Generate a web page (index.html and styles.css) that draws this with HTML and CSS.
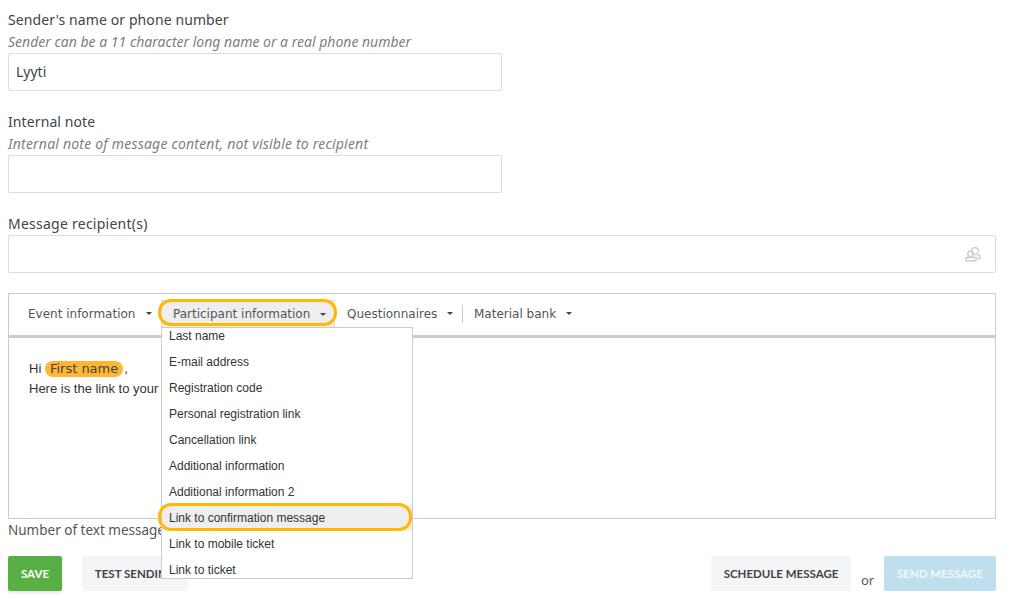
FILE: index.html
```html
<!DOCTYPE html>
<html lang="en">
<head>
<meta charset="utf-8">
<title>Text message</title>
<link rel="stylesheet" href="styles.css">
</head>
<body>
<main class="page">
  <section class="field">
    <div class="label">Sender's name or phone number</div>
    <div class="hint">Sender can be a 11 character long name or a real phone number</div>
    <div class="input half">Lyyti</div>
  </section>
  <section class="field">
    <div class="label">Internal note</div>
    <div class="hint hint-wide">Internal note of message content, not visible to recipient</div>
    <div class="input half"></div>
  </section>
  <section class="field recipients">
    <div class="label label-wide">Message recipient(s)</div>
    <div class="input full">
      <svg class="people" width="16" height="16" viewBox="0 0 16 16" fill="none" stroke="#cfcfcf" stroke-width="1.5">
        <circle cx="10" cy="5" r="3.4"/>
        <circle cx="5.6" cy="7.8" r="2.8"/>
        <path d="M1.2 14.8v-3.2h9.8v3.2z"/>
        <path d="M12.4 9.2h2.4v3.4h-2.6"/>
      </svg>
    </div>
  </section>
  <section class="editor">
    <div class="toolbar">
      <div class="tool first">Event information<span class="caret wide"></span></div>
      <div class="tool active">Participant information<span class="caret"></span></div>
      <div class="tool third">Questionnaires<span class="caret"></span></div>
      <div class="sep"></div>
      <div class="tool fourth">Material bank<span class="caret"></span></div>
    </div>
    <div class="content">
      <div>Hi <span class="tag">First name</span><span class="comma">,</span></div>
      <div>Here is the link to your</div>
    </div>
    <div class="ring ring-tool"></div>
    <div class="menu">
      <div class="menu-inner">
        <div class="item">Last name</div>
        <div class="item">E-mail address</div>
        <div class="item">Registration code</div>
        <div class="item">Personal registration link</div>
        <div class="item">Cancellation link</div>
        <div class="item">Additional information</div>
        <div class="item">Additional information 2</div>
        <div class="item selected">Link to confirmation message</div>
        <div class="item">Link to mobile ticket</div>
        <div class="item">Link to ticket</div>
      </div>
    </div>
    <div class="ring ring-item"></div>
  </section>
  <div class="count">Number of text messages</div>
  <div class="actions">
    <div class="btn save">SAVE</div>
    <div class="btn test">TEST SENDING</div>
    <div class="spacer"></div>
    <div class="btn schedule">SCHEDULE MESSAGE</div>
    <div class="or">or</div>
    <div class="btn send">SEND MESSAGE</div>
  </div>
</main>
</body>
</html>
```
FILE: styles.css
```css
html, body {
  margin: 0;
  padding: 0;
  background: #fff;
}
body {
  width: 1028px;
  height: 615px;
  overflow: hidden;
  font-family: "Noto Sans", "Open Sans", sans-serif;
  color: #444;
}
.page {
  width: 988px;
  padding: 9px 0 0 8px;
}
.field {
  margin-bottom: 20px;
}
.label {
  font-size: 14px;
  line-height: 22px;
  letter-spacing: .1px;
  color: #444;
}
.label-wide {
  letter-spacing: .25px;
}
.hint {
  font-size: 14px;
  line-height: 22px;
  font-style: italic;
  color: #808080;
}
.hint-wide {
  letter-spacing: .2px;
}
.input {
  box-sizing: border-box;
  height: 38px;
  border: 1px solid #ddd;
  border-radius: 2px;
  padding: 0 7px;
  font-size: 14px;
  line-height: 36px;
  color: #444;
}
.half {
  width: 494px;
}
.full {
  width: 988px;
  display: flex;
  justify-content: flex-end;
  align-items: center;
  padding-right: 14px;
}
.recipients {
  margin-top: 20px;
}
.editor {
  position: relative;
  box-sizing: border-box;
  width: 988px;
  height: 226px;
  border: 1px solid #ccc;
}
.toolbar {
  display: flex;
  align-items: flex-start;
  height: 41px;
  border-bottom: 3px solid #ccc;
  font-family: "DejaVu Sans", sans-serif;
  font-size: 12px;
  color: #555;
}
.tool {
  display: flex;
  align-items: center;
  height: 27px;
  margin-top: 6px;
  white-space: nowrap;
  box-sizing: border-box;
}
.first {
  padding-left: 19px;
  width: 152px;
}
.active {
  width: 174px;
  padding-left: 11px;
  background: #eee;
  border: 1px solid #ddd;
  border-bottom: 0;
}
.third {
  padding-left: 12px;
  width: 127px;
}
.fourth {
  padding-left: 11px;
}
.caret {
  width: 0;
  height: 0;
  margin-left: 10px;
  border-left: 3px solid transparent;
  border-right: 3px solid transparent;
  border-top: 3px solid #444;
}
.wide {
  margin-left: 11px;
}
.sep {
  width: 1px;
  height: 18px;
  margin-top: 11px;
  background: #ccc;
}
.content {
  padding: 21px 20px 0;
  font-family: "Liberation Sans", sans-serif;
  font-size: 13px;
  line-height: 20px;
  color: #333;
}
.tag {
  display: inline-block;
  font-family: "DejaVu Sans", sans-serif;
  line-height: 16px;
  background: #ffb733;
  border-radius: 8px;
  padding: 0 5px;
  color: #444;
}
.comma {
  margin-left: 1px;
}
.ring {
  position: absolute;
  box-sizing: border-box;
  border: 3px solid #ffb900;
  border-radius: 13px;
  pointer-events: none;
}
.ring-tool {
  left: 149px;
  top: 5px;
  width: 179px;
  height: 27px;
}
.menu {
  position: absolute;
  left: 152px;
  top: 33px;
  box-sizing: border-box;
  width: 252px;
  height: 252px;
  background: #fff;
  border: 1px solid #ccc;
  overflow: hidden;
  font-family: "Liberation Sans", sans-serif;
  font-size: 12px;
  color: #333;
}
.menu-inner {
  margin-top: -5px;
}
.item {
  height: 26px;
  line-height: 26px;
  padding-left: 7px;
}
.selected {
  background: #eee;
}
.ring-item {
  left: 149px;
  top: 209px;
  width: 254px;
  height: 28px;
}
.count {
  font-size: 13.5px;
  line-height: 22px;
  color: #555;
}
.actions {
  display: flex;
  align-items: flex-start;
  margin-top: 15px;
}
.btn {
  box-sizing: border-box;
  height: 35px;
  line-height: 35px;
  font-family: "Lato", sans-serif;
  font-size: 11.5px;
  font-weight: 700;
  text-align: center;
  border-radius: 2px;
  white-space: nowrap;
}
.save {
  width: 54px;
  background: #58b045;
  color: #fff;
  box-shadow: 0 2px 3px rgba(0, 0, 0, .1);
}
.test {
  width: 106px;
  margin-left: 20px;
  background: #f4f5f7;
  color: #444;
}
.spacer {
  flex: 1;
}
.schedule {
  width: 140px;
  background: #f4f5f7;
  color: #444;
}
.or {
  width: 33px;
  text-align: center;
  font-size: 13px;
  line-height: 20px;
  margin-top: 14px;
  color: #555;
}
.send {
  width: 112px;
  background: #bfdfef;
  color: #eef7fb;
}
```
